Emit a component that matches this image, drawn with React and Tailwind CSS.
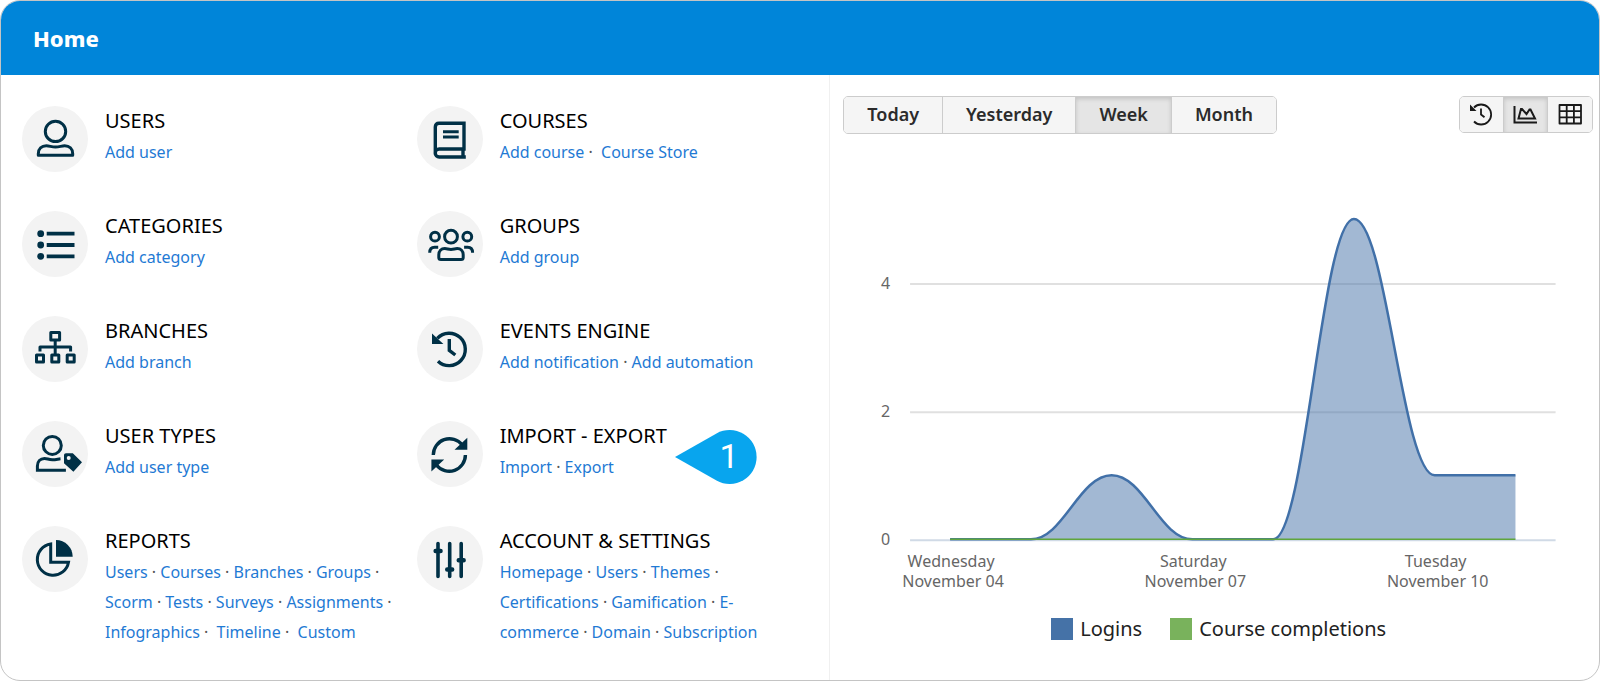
import React, { useState } from "react";

const SECTIONS = [
  { title: "USERS", icon: "user", links: ["Add user"] },
  { title: "COURSES", icon: "book", links: ["Add course", "Course Store"], tight: [0] },
  { title: "CATEGORIES", icon: "list", links: ["Add category"] },
  { title: "GROUPS", icon: "groups", links: ["Add group"] },
  { title: "BRANCHES", icon: "branches", links: ["Add branch"] },
  { title: "EVENTS ENGINE", icon: "history", links: ["Add notification", "Add automation"] },
  { title: "USER TYPES", icon: "userTag", links: ["Add user type"] },
  { title: "IMPORT - EXPORT", icon: "sync", links: ["Import", "Export"], marker: "1" },
  {
    title: "REPORTS",
    icon: "pie",
    links: ["Users", "Courses", "Branches", "Groups", "Scorm", "Tests", "Surveys", "Assignments", "Infographics", "Timeline", "Custom"],
    tight: [8, 9],
  },
  {
    title: "ACCOUNT & SETTINGS",
    icon: "sliders",
    links: ["Homepage", "Users", "Themes", "Certifications", "Gamification", "E-commerce", "Domain", "Subscription"],
  },
];

const ICONS = {
  user: (
    <>
      <circle cx="33.5" cy="25.4" r="10.2" />
      <path strokeLinejoin="round" d="M16.3 49.3v-1.6c0-4.8 3.4-8 8-8 3.2 0 5.2 1.4 9.2 1.4s6-1.4 9.2-1.4c4.6 0 8 3.2 8 8v1.6z" />
    </>
  ),
  book: (
    <>
      <path strokeWidth="3.4" d="M18.3 47V21c0-2.4 1.3-3.7 3.7-3.7h25V43H22.2a4 4 0 0 0 0 8h26.6M46 43v8" />
      <path d="M26 25.7h15.7M26 31h15.7" />
    </>
  ),
  list: (
    <>
      <g fill="currentColor" stroke="none">
        <circle cx="18.7" cy="22.7" r="3.4" />
        <circle cx="18.7" cy="34" r="3.4" />
        <circle cx="18.7" cy="45.3" r="3.4" />
      </g>
      <path strokeWidth="3.8" d="M24.7 22.7h27.8M24.7 34h27.8M24.7 45.3h27.8" />
    </>
  ),
  groups: (
    <>
      <circle cx="34" cy="25.7" r="6.4" />
      <circle cx="18" cy="25.7" r="4.4" />
      <circle cx="50.3" cy="25.7" r="4.4" />
      <path d="M21.8 46.5v-2.7c0-3.8 2.4-6.2 6-6.2 2.4 0 3.4.8 6.2.8s3.8-.8 6.2-.8c3.6 0 6 2.4 6 6.2v2.7c0 1.5-.6 2.1-2.1 2.1H23.9c-1.5 0-2.1-.6-2.1-2.1z" />
      <path d="M12.7 41.7c0-3.6 1.7-5.5 5-5.5h3.5M55.6 41.7c0-3.6-1.7-5.5-5-5.5h-3.5" />
    </>
  ),
  branches: (
    <g strokeLinejoin="round">
      <rect x="28.8" y="16.5" width="8.8" height="7.6" />
      <path d="M33.2 24.5V31M18 35.5V31h30.6v4.5M33.2 31v7" />
      <rect x="14.5" y="39" width="7" height="7" />
      <rect x="29.8" y="39" width="7" height="7" />
      <rect x="45.2" y="39" width="7" height="7" />
    </g>
  ),
  history: (
    <>
      <path strokeWidth="3.4" d="M20.3 22.3A16.2 16.2 0 1 1 21 45.2M32.3 23v11.4l6 4.6" />
      <path fill="currentColor" stroke="none" d="M15 17.5V28h11.4z" />
    </>
  ),
  userTag: (
    <>
      <circle cx="30.3" cy="24.4" r="9" />
      <path d="M38.5 37.8c-2.6.2-4.4.9-8.2.9s-5-1.2-7.8-1.2c-4.2 0-7.1 3-7.1 7.5v4.3h28.5" />
      <path
        fill="currentColor"
        stroke="none"
        fillRule="evenodd"
        d="M42 34.2c0-1.2.8-2 2-2h6.8L60 41.2l-8.6 9.5L42 42.2zM46.7 35a2 2 0 1 0 0 4 2 2 0 0 0 0-4z"
      />
    </>
  ),
  sync: (
    <>
      <path strokeWidth="3.4" d="M16.3 34a16.2 16.2 0 0 1 28.800-10.200M48.400 34a16.200 16.200 0 0 1-28.800 10.200" />
      <path fill="currentColor" stroke="none" d="M50.300 16.800v12H37.500zM14.400 50.500v-12h12.800z" />
    </>
  ),
  pie: (
    <>
      <path d="M28.7 18v18.200h17.800A15.700 15.700 0 1 1 28.700 18z" />
      <path fill="currentColor" stroke="none" d="M34 14a16.700 16.700 0 0 1 16.700 16.700H34z" />
    </>
  ),
  sliders: (
    <g strokeLinecap="round">
      <path strokeWidth="3.6" d="M21 17.500v33M32.700 17.500v33M44.200 17.500v33" />
      <path strokeWidth="4.4" d="M18.600 25h5M30.200 43.500h5M41.700 34.200h5" />
    </g>
  ),
};

function SectionIcon({ name }) {
  return (
    <span className="size-[66px] shrink-0 rounded-full bg-[#f3f3f3] text-[#003046]">
      <svg viewBox="0 0 66 66" className="size-full" fill="none" stroke="currentColor" strokeWidth="3" aria-hidden="true">
        {ICONS[name]}
      </svg>
    </span>
  );
}

function Marker({ label }) {
  return (
    <svg viewBox="0 0 82 54" className="absolute left-[258px] top-[9px] w-[82px] h-[54px]">
      <path fill="#08a5ee" d="M0 27L41.5 3.400A27 27 0 1 1 41.500 50.600z" />
      <text x="54" y="38" textAnchor="middle" fill="#fff" fontSize="34" fontFamily="Roboto, sans-serif">
        {label}
      </text>
    </svg>
  );
}

function Section({ title, icon, links, tight = [], marker }) {
  return (
    <section className="relative flex h-[66px] gap-[17px]">
      <SectionIcon name={icon} />
      <div className="w-[294px]">
        <h2 className="text-[20px] leading-[30px] text-black">{title}</h2>
        <p className="text-[16px] leading-[30px] text-[#555] mt-px">
          {links.map((link, i) => (
            <React.Fragment key={link}>
              <a href="#" className="text-[#1f7ad4] hover:underline">
                {link}
              </a>
              {i < links.length - 1 && (tight.includes(i) ? " · \u00a0" : " · ")}
            </React.Fragment>
          ))}
        </p>
      </div>
      {marker && <Marker label={marker} />}
    </section>
  );
}

const PERIODS = ["Today", "Yesterday", "Week", "Month"];

const VIEWS = [
  {
    id: "Timeline",
    icon: (
      <>
        <path strokeWidth="1.8" d="M5 5.5A10 10 0 1 1 5 19.500M12 6.500v6l3.500 2.700" />
        <path fill="currentColor" stroke="none" d="M1 2.500V9h6.500z" />
      </>
    ),
  },
  {
    id: "Chart",
    icon: (
      <>
        <path strokeWidth="2" d="M1.5 4v16.500H24" />
        <path strokeWidth="2" d="M5.5 16.500l2.500-9.500h1l4.500 5 3-4.500h1l4.500 9z" />
      </>
    ),
  },
  {
    id: "Table",
    icon: <path strokeWidth="1.8" strokeLinejoin="round" d="M1.5 3H23v18.500H1.500zM1.500 9.200H23M1.500 15.400H23M8.700 3v18.500M15.900 3v18.500" />,
  },
];

function Toolbar() {
  const [period, setPeriod] = useState("Week");
  const [view, setView] = useState("Chart");
  const pressed = "bg-[#e5e5e5] shadow-[inset_0_2px_4px_rgba(0,0,0,0.15)]";

  return (
    <div className="flex items-start justify-between pl-[13px] pr-[6px] pt-[21px]">
      <div className="flex h-[38px] overflow-hidden rounded-[5px] border border-[#ccc] divide-x divide-[#ccc]">
        {PERIODS.map((p) => (
          <button
            key={p}
            type="button"
            aria-pressed={p === period}
            onClick={() => setPeriod(p)}
            className={`px-[23px] pb-px text-[18px] font-semibold text-[#2b2b2b] ${p === period ? pressed : "bg-[#f5f5f5]"}`}
          >
            {p}
          </button>
        ))}
      </div>
      <div className="flex h-[37px] overflow-hidden rounded-[5px] border border-[#ccc] divide-x divide-[#ccc]">
        {VIEWS.map(({ id, icon }) => (
          <button
            key={id}
            type="button"
            aria-label={id}
            aria-pressed={id === view}
            onClick={() => setView(id)}
            className={`flex w-11 items-center justify-center text-[#1a1a1a] ${id === view ? pressed : "bg-[#f5f5f5]"}`}
          >
            <svg viewBox="0 0 25 25" className="size-[25px]" fill="none" stroke="currentColor">
              {icon}
            </svg>
          </button>
        ))}
      </div>
    </div>
  );
}

const LOGINS = [0, 0, 1, 0, 0, 5, 1, 1];
const TICKS = [
  { index: 0, day: "Wednesday", date: "November 04" },
  { index: 3, day: "Saturday", date: "November 07" },
  { index: 6, day: "Tuesday", date: "November 10" },
];
const BASE = 406;
const toX = (i) => 120 + i * 80.7;
const toY = (v) => BASE - 1 - v * 64;

// smooth curve through the points that never overshoots its neighbours
function splinePath(values) {
  const pts = values.map((v, i) => [toX(i), toY(v)]);
  const handles = pts.map(([x, y], i) => {
    if (i === 0 || i === pts.length - 1) return { left: [x, y], right: [x, y] };
    const [px, py] = pts[i - 1];
    const [nx, ny] = pts[i + 1];
    const lx = (1.5 * x + px) / 2.5;
    const rx = (1.5 * x + nx) / 2.5;
    let ly = (1.5 * y + py) / 2.5;
    let ry = (1.5 * y + ny) / 2.5;
    const fix = ((ry - ly) * (rx - x)) / (rx - lx) + y - ry;
    ly += fix;
    ry += fix;
    if (ly > Math.max(py, y)) {
      ly = Math.max(py, y);
      ry = 2 * y - ly;
    } else if (ly < Math.min(py, y)) {
      ly = Math.min(py, y);
      ry = 2 * y - ly;
    }
    if (ry > Math.max(ny, y)) {
      ry = Math.max(ny, y);
      ly = 2 * y - ry;
    } else if (ry < Math.min(ny, y)) {
      ry = Math.min(ny, y);
      ly = 2 * y - ry;
    }
    return { left: [lx, ly], right: [rx, ry] };
  });
  return pts.reduce(
    (d, p, i) => (i === 0 ? `M${p}` : `${d} C${handles[i - 1].right} ${handles[i].left} ${p}`),
    ""
  );
}

function Chart() {
  const line = splinePath(LOGINS);
  const end = toX(LOGINS.length - 1);

  return (
    <svg viewBox="0 0 768 464" className="block w-full" fontSize="16" fill="#666">
      {[0, 2, 4].map((v) => (
        <g key={v}>
          <path d={`M80 ${BASE - v * 64}H725`} stroke={v === 0 ? "#d0dae6" : "#e0e0e0"} strokeWidth="2" />
          <text x="60" y={BASE - v * 64 + 5} textAnchor="end">
            {v}
          </text>
        </g>
      ))}
      <path d={`${line} V${BASE - 1} H120z`} fill="#4572a7" fillOpacity="0.5" />
      <path d={line} fill="none" stroke="#4170a8" strokeWidth="2.5" />
      <path d={`M${toX(0)} ${BASE - 1}H${end}`} stroke="#5fa53c" strokeWidth="1.5" />
      {TICKS.map(({ index, day, date }) => (
        <text key={day} textAnchor="middle">
          <tspan x={toX(index) + 1} y="433">{day}</tspan>
          <tspan x={toX(index) + 3} y="453">{date}</tspan>
        </text>
      ))}
    </svg>
  );
}

function Legend() {
  return (
    <ul className="flex justify-center gap-7 pl-2 pt-[17px] text-[20px] leading-[28px] text-[#222]">
      <li className="flex items-center gap-[7px]">
        <span className="size-[22px] bg-[#4572a7]" />
        Logins
      </li>
      <li className="flex items-center gap-[7px]">
        <span className="size-[22px] bg-[#79b25c]" />
        Course completions
      </li>
    </ul>
  );
}

export default function App() {
  return (
    <div className="flex min-h-screen flex-col overflow-hidden rounded-[20px] border border-[#c4c4c4] bg-white font-['Noto_Sans','Open_Sans',sans-serif]">
      <header className="bg-[#0085d9] px-8 py-[22px]">
        <h1 className="text-[22px] leading-[30px] font-extrabold text-white">Home</h1>
      </header>
      <main className="flex flex-1">
        <div className="grid w-[51.9%] grid-cols-2 content-start gap-y-[39px] border-r border-[#f0f0f0] pl-[21px] pr-[18px] pt-[31px]">
          {SECTIONS.map((section) => (
            <Section key={section.title} {...section} />
          ))}
        </div>
        <div className="flex-1">
          <Toolbar />
          <Chart />
          <Legend />
        </div>
      </main>
    </div>
  );
}
